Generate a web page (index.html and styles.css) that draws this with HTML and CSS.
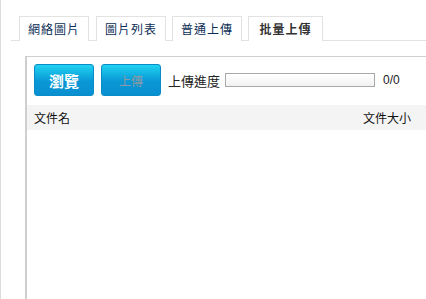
FILE: index.html
```html
<!DOCTYPE html>
<html lang="zh-Hant">
<head>
  <meta charset="UTF-8">
  <title>批量上傳</title>
  <link rel="stylesheet" href="styles.css">
</head>
<body>
  <div class="page">
    <ul class="tabs">
      <li class="tab">網絡圖片</li>
      <li class="tab">圖片列表</li>
      <li class="tab">普通上傳</li>
      <li class="tab active">批量上傳</li>
    </ul>

    <div class="panel">
      <div class="toolbar">
        <button class="btn btn-browse">瀏覽</button>
        <button class="btn btn-upload" disabled>上傳</button>
        <span class="label">上傳進度</span>
        <div class="progress"><div class="progress-bar" style="width:0%"></div></div>
        <span class="count">0/0</span>
      </div>

      <div class="file-head">
        <span>文件名</span>
        <span>文件大小</span>
      </div>
      <div class="file-list"></div>
    </div>
  </div>
</body>
</html>
```

FILE: styles.css
```css
html, body {
  margin: 0;
  padding: 0;
  height: 100%;
  overflow: hidden;
  background: #fff;
}

body {
  font-family: "Noto Sans CJK TC", "Liberation Sans", sans-serif;
  font-size: 12px;
  color: #222;
}

.page {
  height: 100%;
  border-left: 1px solid #dcdcdc;
  box-sizing: border-box;
  padding-top: 16px;
  display: flex;
  flex-direction: column;
}

.tabs {
  list-style: none;
  margin: 0 0 0 10px;
  padding: 0 0 0 8px;
  height: 24px;
  display: flex;
  gap: 6px;
  border-bottom: 1px solid #e2e2e2;
  flex-shrink: 0;
}

.tab {
  box-sizing: border-box;
  width: 70px;
  height: 25px;
  border: 1px solid #e2e2e2;
  border-bottom: none;
  background: #fff;
  color: #0b2d55;
  font-size: 12px;
  line-height: 23px;
  letter-spacing: 1px;
  text-align: center;
}

.tab:first-child {
  margin-right: 1px;
}

.tab.active {
  width: 75px;
  color: #333;
  font-weight: bold;
  position: relative;
  z-index: 1;
}

.panel {
  flex: 1;
  margin: 15px -10px 0 24px;
  border-top: 1px solid #cfcfcf;
  border-left: 2px solid #cfcfcf;
}

.toolbar {
  display: flex;
  align-items: center;
  padding: 7px 7px 9px 7px;
}

.btn {
  width: 60px;
  height: 32px;
  margin-right: 7px;
  border: 1px solid #0a8cc8;
  border-radius: 3px;
  background: linear-gradient(#20d2f0, #0997d6 55%, #0a8fd0);
  font-family: inherit;
  padding: 0;
}

.btn-browse {
  color: #fff;
  font-size: 15px;
  font-weight: bold;
}

.btn-upload {
  color: #8d9aa3;
  font-size: 12px;
}

.label {
  font-size: 13px;
  color: #222;
  margin-right: 5px;
}

.progress {
  width: 148px;
  height: 12px;
  border: 1px solid #a9a9a9;
  background: linear-gradient(#fff, #f1f1f1);
}

.progress-bar {
  height: 100%;
  background: #0a9ad8;
}

.count {
  margin-left: 8px;
  font-family: "Liberation Sans", sans-serif;
  font-size: 12px;
  color: #222;
}

.file-head {
  display: flex;
  justify-content: space-between;
  height: 25px;
  line-height: 25px;
  padding: 0 25px 0 7px;
  background: #f4f4f4;
  font-size: 12px;
  color: #111;
}
```
